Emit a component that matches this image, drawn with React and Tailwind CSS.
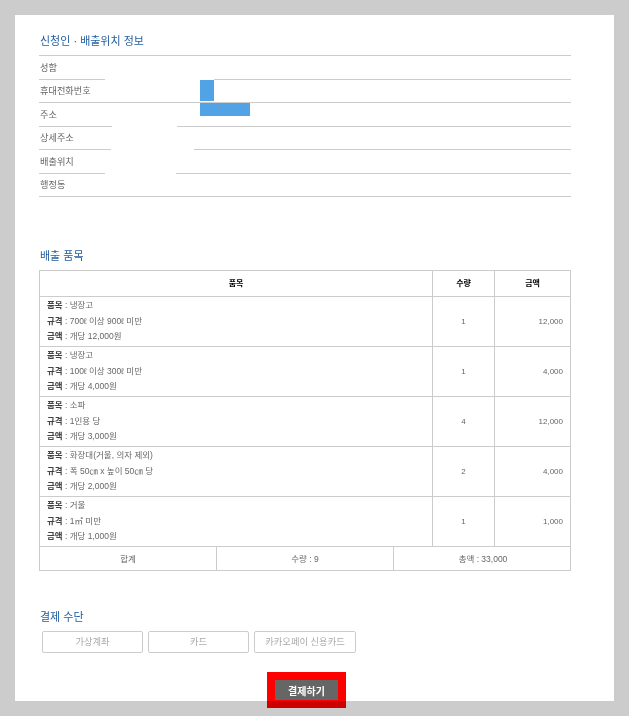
import React from 'react';

const font = { fontFamily: '"Liberation Sans", "Noto Sans CJK KR", sans-serif' };

const items = [
  { name: '냉장고', spec: '700ℓ 이상 900ℓ 미만', price: '12,000', qty: 1, total: '12,000' },
  { name: '냉장고', spec: '100ℓ 이상 300ℓ 미만', price: '4,000', qty: 1, total: '4,000' },
  { name: '소파', spec: '1인용 당', price: '3,000', qty: 4, total: '12,000' },
  { name: '화장대(거울, 의자 제외)', spec: '폭 50㎝ x 높이 50㎝ 당', price: '2,000', qty: 2, total: '4,000' },
  { name: '거울', spec: '1㎡ 미만', price: '1,000', qty: 1, total: '1,000' },
];

const Row = ({ label, left, right, children }) => (
  <div className="relative flex h-[23.5px] items-center">
    <div className="absolute left-0 bottom-0 h-px bg-[#ccc]" style={{ width: left }} />
    <div className="absolute right-0 bottom-0 h-px bg-[#ccc]" style={{ width: right }} />
    <span className="pl-px pt-[2px] text-[9.2px] text-[#666]">{label}</span>
    {children}
  </div>
);

const Detail = ({ label, value }) => (
  <p className="h-[15.5px] leading-[15.5px]">
    <span className="font-bold text-[#444]">{label}</span> : {value}
  </p>
);

const App = () => {
  return (
    <div className="h-[716px] overflow-hidden bg-[#ccc] px-[15px] pt-[15px]" style={font}>
      <div className="relative h-[686px] w-[599px] bg-white px-6 pt-[18px]">
        <h2 className="h-[23px] w-[532px] border-b border-[#ccc] pl-px text-[11px] leading-[17px] text-[#1f5c9e]">
          신청인 · 배출위치 정보
        </h2>

        <div className="w-[532px]">
          <Row label="성함" left={66} right={357} />
          <Row label="휴대전화번호" left={532} right={532}>
            <div className="absolute left-[161px] top-[0px] h-[21px] w-[14px] bg-[#52a3e6]" />
          </Row>
          <Row label="주소" left={73} right={394}>
            <div className="absolute left-[161px] top-[0px] h-[13px] w-[50px] bg-[#52a3e6]" />
          </Row>
          <Row label="상세주소" left={72} right={377} />
          <Row label="배출위치" left={66} right={395} />
          <Row label="행정동" left={532} right={532} />
        </div>

        <h2 className="mt-[51px] h-[15px] pl-px text-[11px] leading-[17px] text-[#1f5c9e]">배출 품목</h2>

        <table className="mt-[7px] w-[532px] table-fixed border-collapse text-[8.5px] text-[#666]">
          <thead>
            <tr className="h-[26px] font-bold text-black">
              <th className="border border-[#ccc] text-[8px]">품목</th>
              <th className="w-[62px] border border-[#ccc] text-[8px]">수량</th>
              <th className="w-[76px] border border-[#ccc] text-[8px]">금액</th>
            </tr>
          </thead>
          <tbody>
            {items.map((item, i) => (
              <tr key={i} className="h-[50px]">
                <td className="border border-[#ccc] pl-[7px]">
                  <Detail label="품목" value={item.name} />
                  <Detail label="규격" value={item.spec} />
                  <Detail label="금액" value={`개당 ${item.price}원`} />
                </td>
                <td className="border border-[#ccc] text-center text-[8px]">{item.qty}</td>
                <td className="border border-[#ccc] pr-[7px] text-right text-[8px]">{item.total}</td>
              </tr>
            ))}
          </tbody>
        </table>

        <div className="-mt-px grid h-[25px] w-[532px] grid-cols-[177px_177px_178px] border border-[#ccc] text-[8.5px] leading-[24px] text-[#666]">
          <div className="border-r border-[#ccc] text-center">합계</div>
          <div className="border-r border-[#ccc] text-center">수량 : 9</div>
          <div className="text-center">총액 : 33,000</div>
        </div>

        <h2 className="mt-[38px] h-[15px] pl-px text-[11px] leading-[17px] text-[#1f5c9e]">결제 수단</h2>

        <div className="mt-[7px] flex gap-[5px] pl-[3px]">
          <button className="h-[22px] w-[101px] rounded-[2px] border border-[#ccc] pt-px text-[9.3px] text-[#aaa]">가상계좌</button>
          <button className="h-[22px] w-[101px] rounded-[2px] border border-[#ccc] pt-px text-[9.3px] text-[#aaa]">카드</button>
          <button className="h-[22px] w-[102px] rounded-[2px] border border-[#ccc] pt-px text-[9.3px] text-[#aaa]">카카오페이 신용카드</button>
        </div>

        <div className="relative mt-[27px] ml-[236px] flex h-[20px] w-[63px] items-center justify-center bg-[#666] pt-[3px] text-[10px] font-bold text-white">
          결제하기
          <div className="absolute -inset-2 border-8 border-[#f00] mix-blend-multiply" />
        </div>
      </div>
    </div>
  );
};

export default App;
